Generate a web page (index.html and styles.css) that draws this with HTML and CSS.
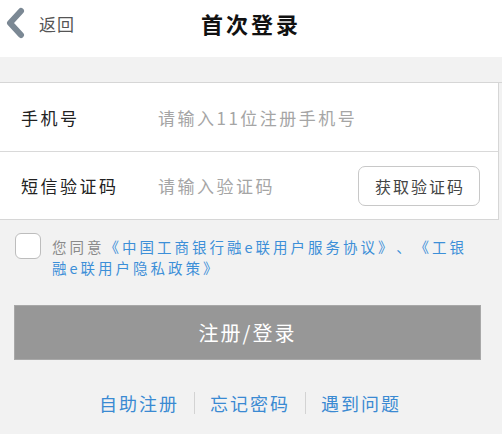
FILE: index.html
```html
<!DOCTYPE html>
<html lang="zh-CN">
<head>
<meta charset="utf-8">
<title>首次登录</title>
<link rel="stylesheet" href="styles.css">
</head>
<body>
<div class="page">
  <header class="topbar">
    <a class="back">
      <svg class="chev" width="22" height="32" viewBox="0 0 22 32"><path d="M17 4 L6 16 L17 28" fill="none" stroke="#7b8894" stroke-width="6" stroke-linecap="round" stroke-linejoin="round"/></svg>
      <span class="back-text">返回</span>
    </a>
    <h1 class="title">首次登录</h1>
  </header>
  <div class="band"></div>
  <section class="card">
    <div class="row">
      <span class="label">手机号</span>
      <span class="placeholder">请输入11位注册手机号</span>
    </div>
    <div class="row">
      <span class="label">短信验证码</span>
      <span class="placeholder grow">请输入验证码</span>
      <span class="code-btn">获取验证码</span>
    </div>
  </section>
  <div class="agree">
    <span class="checkbox"></span>
    <p class="agree-text"><span class="muted">您同意</span><span class="link">《中国工商银行融e联用户服务协议》</span><span class="dot">、</span><span class="link">《工银融e联用户隐私政策》</span></p>
  </div>
  <div class="submit-wrap">
    <div class="submit">注册/登录</div>
  </div>
  <nav class="links">
    <span class="lnk">自助注册</span>
    <span class="sep"></span>
    <span class="lnk">忘记密码</span>
    <span class="sep"></span>
    <span class="lnk">遇到问题</span>
  </nav>
</div>
</body>
</html>
```
FILE: styles.css
```css
* { box-sizing: border-box; margin: 0; padding: 0; }
html, body { width: 502px; height: 434px; overflow: hidden; }
body {
  background: #f2f2f2;
  font-family: "Noto Sans CJK SC", "Noto Sans", sans-serif;
  color: #222;
}
.page { width: 502px; }
.topbar {
  height: 57px;
  background: #fff;
  position: relative;
  display: flex;
  align-items: center;
  justify-content: center;
}
.back {
  position: absolute;
  left: 4px;
  top: 7px;
  display: flex;
  align-items: center;
  gap: 13px;
}
.back-text { font-size: 17px; color: #555; letter-spacing: 1px; }
.title { font-size: 22px; font-weight: 700; color: #111; letter-spacing: 3px; margin-left: 0; margin-top: -12px; }
.band { height: 26px; background: #f2f2f2; border-bottom: 1px solid #d6d6d6; }
.card {
  background: #fff;
  width: 499px;
  border-right: 1px solid #d6d6d6;
  border-bottom: 1px solid #d6d6d6;
}
.row {
  height: 68px;
  display: flex;
  align-items: center;
  padding-left: 21px;
  padding-right: 18px;
}
.row + .row { border-top: 1px solid #d9d9d9; }
.label { width: 137px; font-size: 17px; color: #222; letter-spacing: 2.5px; }
.placeholder { font-size: 17px; color: #a5a5a5; letter-spacing: 2.5px; }
.grow { flex: 1; }
.code-btn {
  width: 122px;
  height: 40px;
  border: 1px solid #c8c8c8;
  border-radius: 7px;
  display: flex;
  align-items: center;
  justify-content: center;
  font-size: 16px;
  color: #444;
  letter-spacing: 2px;
  padding-left: 2px;
}
.agree { display: flex; align-items: flex-start; padding: 13px 20px 0 15px; height: 85px; }
.checkbox {
  width: 26px; height: 26px;
  border: 1.5px solid #bdbdbd;
  border-radius: 6px;
  background: #fff;
  flex: none;
  margin-right: 11px;
}
.agree-text { font-size: 14.5px; line-height: 21px; letter-spacing: 3px; margin-top: 3px; }
.muted { color: #8a8a8a; }
.link { color: #3c8fd8; }
.dot { color: #3c8fd8; padding: 0 8px; }
.submit-wrap { padding: 0 21px 0 14px; }
.submit {
  height: 55px;
  background: #979797;
  border: 1px solid #a8a8a8;
  color: #fff;
  font-size: 20px;
  letter-spacing: 2px;
  display: flex;
  align-items: center;
  justify-content: center;
}
.links { display: flex; align-items: center; justify-content: center; margin-top: 30px; padding-right: 2px; }
.lnk { font-size: 18px; color: #3a8ad2; letter-spacing: 2px; }
.sep { width: 1px; height: 22px; background: #d3d3d3; margin: 0 15px; }
```
